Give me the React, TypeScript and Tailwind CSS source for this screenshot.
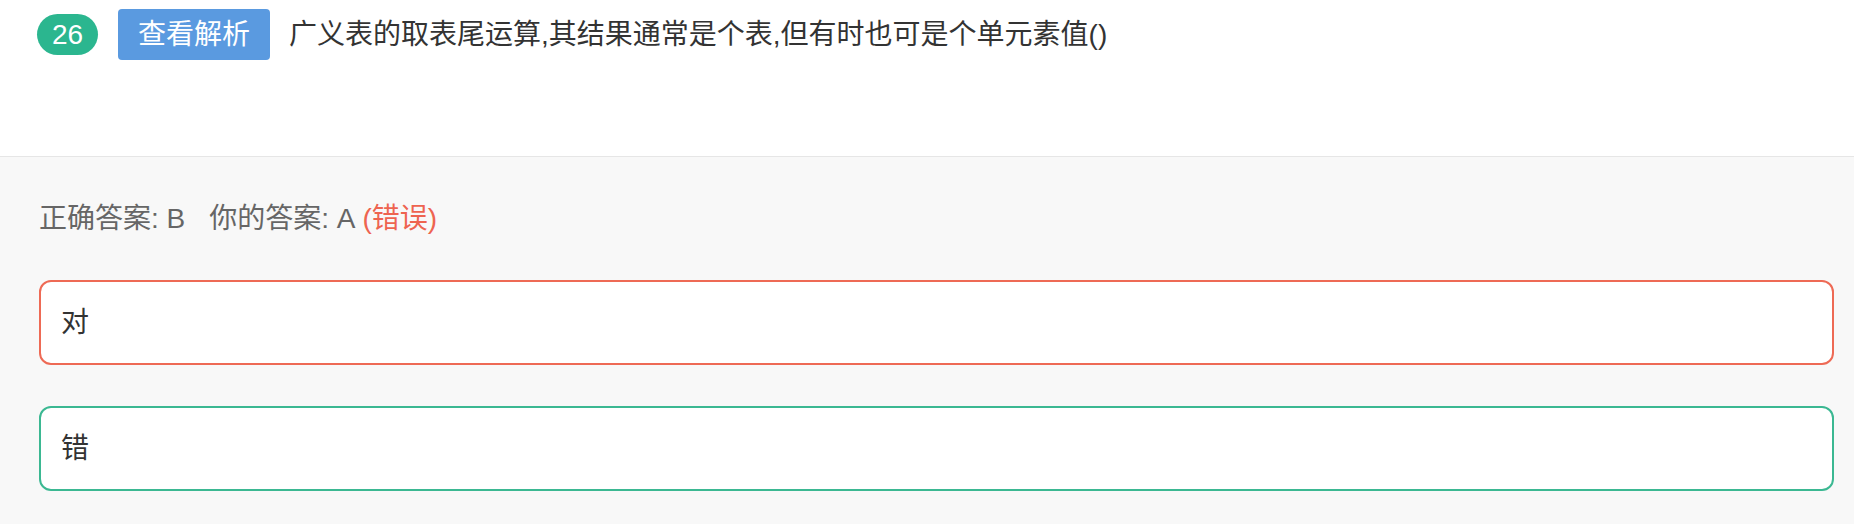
const options = [
  { key: "A", label: "对", state: "wrong" },
  { key: "B", label: "错", state: "right" },
];

export default function App() {
  return (
    <div
      className="w-full min-h-screen bg-[#f8f8f8] text-[#333]"
      style={{ fontFamily: '"Liberation Sans", "Noto Sans CJK SC", sans-serif' }}
    >
      {/* question header */}
      <div className="bg-white h-[157px] border-b border-[#e6e6e6] pl-[37px] pt-[9px]">
        <div className="flex items-center h-[51px]">
          <span className="flex items-center justify-center w-[61px] h-[41px] rounded-full bg-[#2bb68f] text-white text-[28px] font-medium leading-none">
            26
          </span>
          <button className="ml-[20px] h-[51px] w-[152px] rounded-[4px] bg-[#5a9ae0] text-white text-[28px] flex items-center justify-center">
            查看解析
          </button>
          <p className="ml-[19px] text-[28px] text-[#333]">
            广义表的取表尾运算,其结果通常是个表,但有时也可是个单元素值()
          </p>
        </div>
      </div>

      {/* answer area */}
      <div className="pl-[39px] pr-[20px] pt-[42px] pb-[34px]">
        <div className="h-[40px] flex items-center text-[28px] text-[#666]">
          <span>正确答案: B</span>
          <span className="ml-[24px]">你的答案: A</span>
          <span className="ml-[7px] text-[#ee6450]">(错误)</span>
        </div>

        <div className="mt-[41px] flex flex-col gap-[41px]">
          {options.map((o) => (
            <div
              key={o.key}
              className={
                "h-[85px] rounded-[12px] border-2 bg-white flex items-center pl-[20px] text-[28px] text-[#333] " +
                (o.state === "wrong" ? "border-[#ee6a55]" : "border-[#3bb892]")
              }
            >
              {o.label}
            </div>
          ))}
        </div>
      </div>
    </div>
  );
}
